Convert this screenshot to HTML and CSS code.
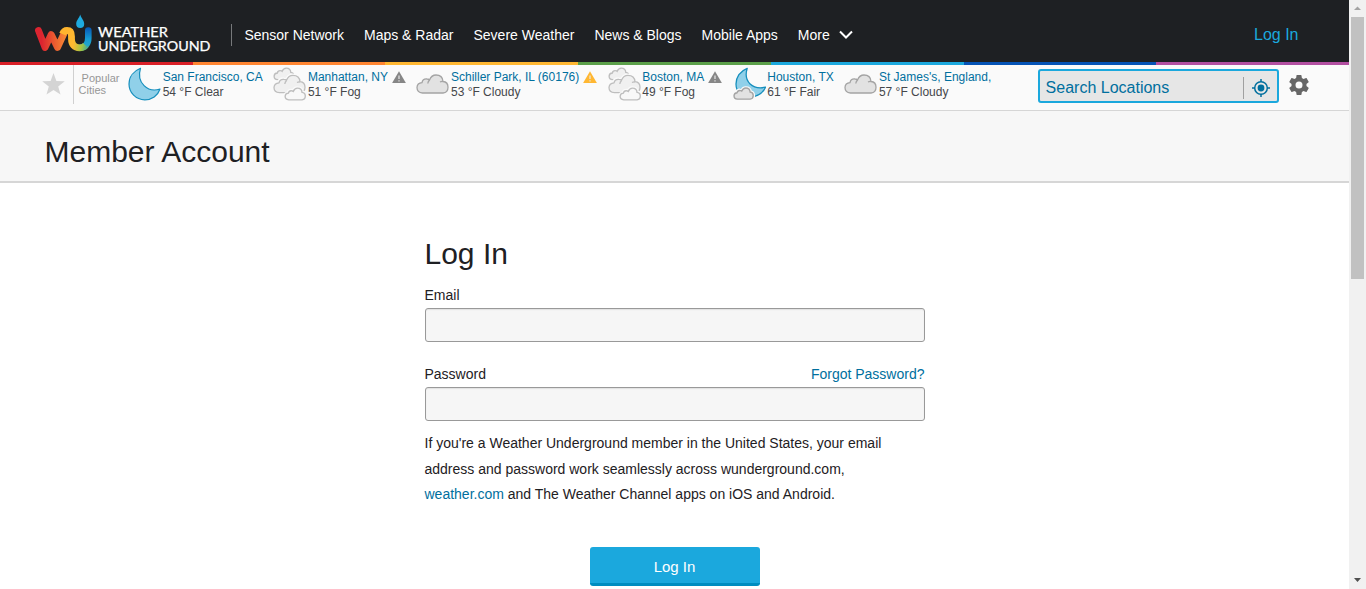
FILE: index.html
```html
<!DOCTYPE html>
<html lang="en">
<head>
<meta charset="utf-8">
<title>Member Account | Weather Underground</title>
<link rel="stylesheet" href="styles.css">
</head>
<body>
<svg class="defs" width="0" height="0" aria-hidden="true">
  <defs>
    <path id="cloud-shape" d="M6.5 19 Q1 18.5 1 13.5 Q1.2 9 6 8.6 Q6.8 4.600 11 5 Q12.500 5 13.500 6 Q15.500 1 20 1 Q26.500 1 27 7.500 Q32 8 32 13.200 Q32 18.500 27 19 Z"/>
    <symbol id="cloudy" viewBox="0 0 33 34">
      <g transform="translate(0 7)" fill="#e2e2e2" stroke="#a4a4a4" stroke-width="1.300"><use href="#cloud-shape"/><path fill="none" d="M13.500 6q-1.500 1.500-1.700 3.500M27 7.500q-1.500-.3-3 .5"/></g>
    </symbol>
    <symbol id="fog" viewBox="0 0 33 34">
      <g fill="#f0f0f0" stroke="#bebebe">
        <use href="#cloud-shape" transform="translate(.5 .5) scale(.64)" stroke-width="2.100"/>
        <g transform="translate(0 7.500)" stroke-width="1.300"><use href="#cloud-shape" transform="scale(1 .96)" stroke="#fafafa" stroke-width="4"/><use href="#cloud-shape" transform="scale(1 .96)"/><path fill="none" d="M13.500 6q-1.500 1.500-1.700 3.500M27 7.500q-1.500-.3-3 .5"/></g>
        <use href="#cloud-shape" transform="translate(11.500 20.500) scale(.65)" stroke="#fafafa" stroke-width="6"/>
        <use href="#cloud-shape" transform="translate(11.500 20.500) scale(.65)" stroke-width="2.100" fill="#f8f8f8"/>
      </g>
    </symbol>
    <symbol id="moon" viewBox="0 0 33 34">
      <path d="M12.500 1.300C5.500 4 1 10 1 17c0 8.800 7 15.800 15.800 15.800 7 0 13-4 15.200-10.800C20 26 8 16 12.500 1.300z" fill="#90d0e9" stroke="#168fbd" stroke-width="1.200" stroke-linejoin="round"/>
    </symbol>
    <symbol id="fair" viewBox="0 0 33 34">
      <path d="M14.200 1.300C7 4 3 10.500 3 17c0 8 6 13 13 13 7 0 13.500-3 16.500-9.800C20 23 10 15 14.200 1.300z" fill="#90d0e9" stroke="#168fbd" stroke-width="1.300" stroke-linejoin="round"/>
      <use href="#cloud-shape" transform="translate(.4 20.400) scale(.62)" stroke="#fafafa" stroke-width="6" fill="#e2e2e2"/>
      <use href="#cloud-shape" transform="translate(.4 20.400) scale(.62)" stroke="#a4a4a4" stroke-width="2.200" fill="#e2e2e2"/>
    </symbol>
    <symbol id="warn" viewBox="0 0 14 12">
      <path d="M7 .3 13.900 12H.1z" fill="currentColor"/><path d="M7 4.500v3.500M7 9.200v1.300" stroke="#e8e8e8" stroke-width="1.200"/>
    </symbol>
    <linearGradient id="w-grad" gradientUnits="userSpaceOnUse" x1="35" x2="68" y1="0" y2="0"><stop offset=".2" stop-color="#dc2430"/><stop offset=".65" stop-color="#ee6430"/><stop offset="1" stop-color="#f89036"/></linearGradient>
    <linearGradient id="u-grad" gradientUnits="userSpaceOnUse" x1="64" x2="88" y1="36" y2="42"><stop offset="0" stop-color="#ffb52e"/><stop offset=".45" stop-color="#ffb931"/><stop offset=".8" stop-color="#a4c442"/><stop offset="1" stop-color="#4fb08a"/></linearGradient>
    <linearGradient id="arm-grad" gradientUnits="userSpaceOnUse" x1="0" x2="0" y1="28" y2="50"><stop offset="0" stop-color="#0959b4"/><stop offset=".5" stop-color="#159bd3"/><stop offset=".8" stop-color="#22a5c8"/><stop offset="1" stop-color="#87bd45"/></linearGradient>
  </defs>
</svg>
<div class="window">
  <div class="page">
    <header class="header">
      <svg class="logo" viewBox="35 12 180 42" role="img" aria-label="Weather Underground">
        <g fill="none" stroke-linecap="round" stroke-linejoin="round">
          <path d="M38.500 30.500 45 47.500 51.200 34.500 57.500 47.500 64 33.500" stroke="url(#w-grad)" stroke-width="6.800"/>
          <path d="M88.300 30.500v7.500c0 6-3.500 9.800-9 9.800" stroke="url(#arm-grad)" stroke-width="6.600"/>
          <path d="M62.500 34c1-2.500 2.500-3.500 4.500-3.500 4 0 4.500 3 4.500 6v2.500c0 5.500 3 8.800 8 8.800 2.500 0 4.500-1 6-2.500" stroke="url(#u-grad)" stroke-width="6.800" stroke-linecap="butt"/>
        </g>
        <path d="M80.200 14.500c1.200 4 4 6 4 9.500a4 4 0 0 1-8 0c0-3.500 2.800-5.500 4-9.500z" fill="#1eaadf"/>
        <text class="logo-text" x="98" y="37" textLength="70" lengthAdjust="spacingAndGlyphs">WEATHER</text>
        <text class="logo-text" x="98" y="51.200" textLength="112.500" lengthAdjust="spacingAndGlyphs">UNDERGROUND</text>
      </svg>
      <nav class="nav">
        <a>Sensor Network</a><a>Maps &amp; Radar</a><a>Severe Weather</a><a>News &amp; Blogs</a><a>Mobile Apps</a>
        <a class="more">More <svg width="16" height="10" viewBox="0 0 16 10"><path d="M2 1.500l6 6 6-6" fill="none" stroke="#fff" stroke-width="2"/></svg></a>
      </nav>
      <a class="header-login">Log In</a>
    </header>
    <div class="stripe"><i class="red"></i><i class="orange"></i><i class="yellow"></i><i class="green"></i><i class="sky"></i><i class="blue"></i><i class="purple"></i></div>
    <div class="city-bar">
      <svg class="star" viewBox="0 0 23 22"><path d="M11.500 0l2.900 7.900 8.400.3-6.600 5.200 2.300 8.200-7-4.700-7 4.700 2.300-8.200L.2 8.200l8.400-.3z" fill="#d4d4d4"/></svg>
      <div class="popular"><span>Popular</span><br>Cities</div>
      <div class="cities">
        <div class="city"><svg class="wx"><use href="#moon"/></svg><div><a>San Francisco, CA</a><p>54 °F Clear</p></div></div>
        <div class="city"><svg class="wx"><use href="#fog"/></svg><div><a>Manhattan, NY <svg class="warn"><use href="#warn"/></svg></a><p>51 °F Fog</p></div></div>
        <div class="city"><svg class="wx"><use href="#cloudy"/></svg><div><a>Schiller Park, IL (60176) <svg class="warn amber"><use href="#warn"/></svg></a><p>53 °F Cloudy</p></div></div>
        <div class="city"><svg class="wx"><use href="#fog"/></svg><div><a>Boston, MA <svg class="warn"><use href="#warn"/></svg></a><p>49 °F Fog</p></div></div>
        <div class="city"><svg class="wx"><use href="#fair"/></svg><div><a>Houston, TX</a><p>61 °F Fair</p></div></div>
        <div class="city"><svg class="wx"><use href="#cloudy"/></svg><div><a>St James's, England,</a><p>57 °F Cloudy</p></div></div>
      </div>
      <div class="search">
        <span>Search Locations</span>
        <div class="locate"><svg width="18" height="18" viewBox="0 0 18 18"><circle cx="9" cy="9" r="6.300" fill="none" stroke="#006f9e" stroke-width="1.500"/><circle cx="9" cy="9" r="3.400" fill="#006f9e"/><path d="M9 0v3M9 15v3M0 9h3M15 9h3" stroke="#006f9e" stroke-width="1.500"/></svg></div>
      </div>
      <svg class="gear" viewBox="2 2 20 20"><path fill="#666" d="M19.430 12.980c.04-.32.07-.64.07-.98s-.03-.66-.07-.98l2.110-1.650c.19-.15.24-.42.12-.64l-2-3.460c-.12-.22-.39-.3-.61-.22l-2.490 1c-.52-.4-1.080-.73-1.690-.98l-.38-2.650A.49.490 0 0 0 14 2h-4c-.25 0-.46.180-.49.420l-.38 2.650c-.61.250-1.170.590-1.690.980l-2.490-1c-.23-.09-.49 0-.61.220l-2 3.460c-.13.220-.07.490.12.640l2.110 1.650c-.04.320-.07.650-.07.980s.03.660.07.980l-2.110 1.650c-.19.150-.24.420-.12.640l2 3.460c.12.220.39.300.61.220l2.490-1c.52.400 1.080.730 1.690.980l.38 2.650c.03.240.24.420.49.420h4c.25 0 .46-.18.490-.42l.38-2.650c.61-.25 1.170-.59 1.690-.98l2.490 1c.23.090.49 0 .61-.22l2-3.460c.12-.22.07-.49-.12-.64zM12 15.500a3.500 3.500 0 1 1 0-7 3.500 3.500 0 0 1 0 7z"/></svg>
    </div>
    <div class="title-bar"><h1>Member Account</h1></div>
    <main class="form">
      <h2>Log In</h2>
      <label>Email</label>
      <div class="field"></div>
      <div class="label-row"><label>Password</label><a>Forgot Password?</a></div>
      <div class="field"></div>
      <p class="note">If you're a Weather Underground member in the United States, your email address and password work seamlessly across wunderground.com, <a>weather.com</a> and The Weather Channel apps on iOS and Android.</p>
      <button class="submit">Log In</button>
    </main>
  </div>
  <div class="scrollbar">
    <svg width="17" height="17"><path d="M5 10h7L8.500 6.500z" fill="#a3a3a3"/></svg>
    <div class="thumb"></div>
    <svg width="17" height="17"><path d="M5 6h7L8.500 10z" fill="#505050"/></svg>
  </div>
</div>
</body>
</html>
```
FILE: styles.css
```css
* { box-sizing: border-box; }
body { margin: 0; font-family: "Liberation Sans", Arial, sans-serif; font-size: 14px; color: #1e2023; background: #fff; overflow: hidden; }
h1, h2, p { margin: 0; font-weight: 400; }
a { color: #006f9e; text-decoration: none; }
svg { display: block; flex: none; }
.defs { position: absolute; }
.window { display: flex; height: 589px; }
.page { width: 1349px; flex: none; overflow: hidden; }

.header { display: flex; height: 62px; background: #1e2023; padding-left: 35px; }
.logo { width: 180px; height: 42px; margin-top: 12px; }
.logo-text { font-family: Lato, sans-serif; font-size: 12.6px; font-weight: 400; fill: #fff; stroke: #fff; stroke-width: .25px; }
.nav { display: flex; align-items: center; gap: 20px; height: 22px; margin: 24px 0 0 16px; padding-left: 12.4px; border-left: 1px solid #77797b; }
.nav a { color: #fff; white-space: nowrap; }
.nav .more { display: flex; align-items: center; gap: 8px; }
.header-login { margin: 26px 50.5px 0 auto; color: #1ba8dd; font-size: 16px; line-height: 18px; }

.stripe { display: flex; height: 3px; }
.stripe i { flex: 1; }
.red { background: #d91f27; }
.orange { background: #ff8531; }
.yellow { background: #ffb732; }
.green { background: #5b9f49; }
.sky { background: #1ba8dd; }
.blue { background: #0553b5; }
.purple { background: #b24fa1; }

.city-bar { display: flex; height: 46px; background: #fafafa; border-bottom: 1px solid #d6d6d6; padding-left: 42px; }
.star { width: 23px; height: 22px; margin-top: 8px; }
.popular { width: 55px; height: 39px; margin-left: 8px; padding: 7px 0 0 4.6px; border-left: 1px solid #d0d0d0; font-size: 11px; line-height: 12px; color: #979797; }
.popular span { margin-left: 3px; }
.cities { display: flex; gap: 10.5px; width: 910px; font-size: 12px; line-height: 15px; padding-top: 5px; white-space: nowrap; }
.city { display: flex; color: #45474a; }
.city a { display: flex; gap: 3.8px; height: 15px; }
.wx { width: 33px; height: 34px; margin: -3px 1.7px 0 0; }
.warn { width: 14px; height: 12px; margin-top: 1px; color: #868686; }
.amber { color: #ffb732; }
.search { display: flex; align-items: center; width: 241px; height: 34px; margin-top: 4px; border: 2px solid #1ba8dd; border-radius: 3px; background: #e6e6e6; color: #006f9e; font-size: 16px; padding: 3px 0 0 5.6px; }
.locate { margin-left: auto; width: 34px; height: 22px; border-left: 1px solid #a0a0a0; padding: 2px 0 0 8px; }
.gear { width: 20px; height: 20px; margin: 10px 0 0 9.5px; }

.title-bar { height: 72px; background: #f7f7f7; border-bottom: 2px solid #d6d6d6; padding: 23px 0 0 44.5px; }
h1, h2 { font-size: 30px; line-height: 35px; }

.form { width: 500px; margin: 0 auto; padding-top: 53px; }
label { display: block; line-height: 16px; }
h2 + label { margin-top: 16px; }
.field { height: 34px; margin-top: 5px; border: 1px solid #999; border-radius: 3px; background: #f6f6f6; box-shadow: inset 0 1px 1px #e2e2e2; }
.label-row { display: flex; justify-content: space-between; margin-top: 24px; line-height: 16px; }
.note { margin-top: 10px; line-height: 25.5px; }
.submit { display: block; width: 170px; height: 39px; margin: 39px auto 0; border: 0; border-bottom: 3px solid #008dc0; border-radius: 3px; background: #1ba8dd; color: #fff; font: 15px "Liberation Sans", Arial, sans-serif; padding: 4px 0 0; }

.scrollbar { display: flex; flex-direction: column; width: 17px; background: #f1f1f1; }
.thumb { width: 13px; height: 262px; margin: 0 2px auto; background: #c1c1c1; }
```
